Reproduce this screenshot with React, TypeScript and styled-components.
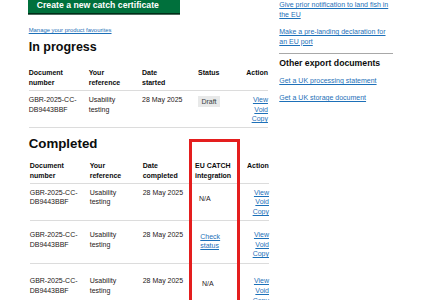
import React from "react";
import styled, { createGlobalStyle } from "styled-components";

const GlobalStyle = createGlobalStyle`
  html, body { margin: 0; padding: 0; background: #ffffff; }
  body {
    font-family: "Liberation Sans", Arial, sans-serif;
    color: #0b0c0c;
  }
`;

const LINK = "#1d70b8";
const BORDER = "#dcdcdc";

const Page = styled.div`
  display: flex;
  align-items: flex-start;
  gap: 10.3px;
  padding-left: 28.7px;
`;

const Main = styled.main`
  width: 240.3px;
  display: flex;
  flex-direction: column;
  align-items: flex-start;
`;

const StartButton = styled.a`
  display: block;
  box-sizing: border-box;
  width: 151.7px;
  margin-left: -0.4px;
  padding: 0 0 2.9px 8.4px;
  background: #00703c;
  box-shadow: 0 1.7px 0 #002d18;
  color: #ffffff;
  font-weight: 700;
  font-size: 8.7px;
  line-height: 10.4px;
  text-decoration: none;
`;

const SmallLink = styled.a`
  display: block;
  margin-top: 14.2px;
  font-size: 5.9px;
  line-height: 7px;
  color: ${LINK};
  text-decoration: underline;
`;

const Heading = styled.h2<{ $size: number; $lh: number; $mt: number }>`
  margin: ${(p) => p.$mt}px 0 0;
  font-size: ${(p) => p.$size}px;
  line-height: ${(p) => p.$lh}px;
  font-weight: 700;
`;

const Table = styled.div<{ $mt: number; $ml?: number }>`
  margin-top: ${(p) => p.$mt}px;
  margin-left: ${(p) => p.$ml ?? 0}px;
  width: 239.3px;
  font-size: 7px;
  line-height: 9.7px;
`;

const Row = styled.div<{ $cols: string; $pt: number; $pb: number }>`
  display: grid;
  grid-template-columns: ${(p) => p.$cols};
  padding: ${(p) => p.$pt}px 0 ${(p) => p.$pb}px;
  border-bottom: 1px solid ${BORDER};
`;

const HeadCell = styled.div`
  font-weight: 700;
  padding-right: 6.7px;
`;

const Cell = styled.div`
  padding-right: 6.7px;
  color: #1f2020;
`;

const ActionCell = styled.div`
  display: flex;
  flex-direction: column;
  align-items: flex-end;
`;

const TextLink = styled.a`
  color: ${LINK};
  text-decoration: underline;
  text-underline-offset: 1px;
`;

const Tag = styled.span`
  display: inline-block;
  margin-top: 1.4px;
  margin-left: -0.3px;
  padding: 0.4px 3.7px;
  background: #e8e9e9;
  color: #383f43;
`;

const EuCell = styled.div<{ $dx: number; $dy: number }>`
  padding: ${(p) => p.$dy}px 0 0 ${(p) => p.$dx}px;
  color: #1f2020;
`;

const WrapLink = styled(TextLink)`
  display: inline-block;
  width: min-content;
`;

const CompletedSection = styled.section`
  position: relative;
  align-self: stretch;
  display: flex;
  flex-direction: column;
  align-items: flex-start;
`;

const Highlight = styled.div`
  position: absolute;
  left: 160.3px;
  top: 11.6px;
  width: 51px;
  height: 190px;
  box-sizing: border-box;
  border: 3px solid #e41e1e;
  pointer-events: none;
`;

const Aside = styled.aside`
  width: 114px;
  display: flex;
  flex-direction: column;
`;

const SideLink = styled.a<{ $mt: number }>`
  display: block;
  margin-top: ${(p) => p.$mt}px;
  font-size: 7px;
  line-height: 9.7px;
  color: ${LINK};
  text-decoration: underline;
  text-underline-offset: 1px;
`;

const Rule = styled.hr`
  margin: 6.95px 0 0;
  height: 0;
  border: 0;
  border-top: 1px solid #a8a8a8;
  width: 100%;
`;

const SideHeading = styled.h3`
  margin: 3.3px 0 0;
  font-size: 8.7px;
  line-height: 10.4px;
  font-weight: 700;
`;

const Lines = ({ lines }: { lines: string[] }) => (
  <>
    {lines.map((l, i) => (
      <React.Fragment key={i}>
        {i > 0 && <br />}
        {l}
      </React.Fragment>
    ))}
  </>
);

const Actions = () => (
  <ActionCell>
    <TextLink href="#">View</TextLink>
    <TextLink href="#">Void</TextLink>
    <TextLink href="#">Copy</TextLink>
  </ActionCell>
);

const DOC = "GBR-2025-CC-DB9443BBF";
const IN_COLS = "60px 53.3px 56px 48.3px 21.7px";
const DONE_COLS = "60px 53px 52.3px 52px 22px";

const completedRows = [
  { pt: 3.45, pb: 3.25, dx: 4, dy: 6.3, eu: "na" },
  { pt: 8.95, pb: 3.55, dx: 5.3, dy: 1.7, eu: "check" },
  { pt: 12.55, pb: 3.3, dx: 7, dy: 3, eu: "na" },
];

export default function App() {
  return (
    <>
      <GlobalStyle />
      <Page>
        <Main>
          <StartButton href="#">Create a new catch certificate</StartButton>
          <SmallLink href="#">Manage your product favourites</SmallLink>
          <Heading $size={12.5} $lh={15} $mt={6}>
            In progress
          </Heading>
          <Table $mt={12.35}>
            <Row $cols={IN_COLS} $pt={0} $pb={3.15}>
              <HeadCell><Lines lines={["Document", "number"]} /></HeadCell>
              <HeadCell><Lines lines={["Your", "reference"]} /></HeadCell>
              <HeadCell><Lines lines={["Date", "started"]} /></HeadCell>
              <HeadCell>Status</HeadCell>
              <HeadCell>Action</HeadCell>
            </Row>
            <Row $cols={IN_COLS} $pt={3.45} $pb={2.85}>
              <Cell>{DOC}</Cell>
              <Cell>Usability testing</Cell>
              <Cell>28 May 2025</Cell>
              <Cell>
                <Tag>Draft</Tag>
              </Cell>
              <Actions />
            </Row>
          </Table>

          <CompletedSection>
            <Heading $size={13.3} $lh={16} $mt={8.6}>
              Completed
            </Heading>
            <Table $mt={8.45} $ml={1}>
              <Row $cols={DONE_COLS} $pt={0} $pb={3.15}>
                <HeadCell><Lines lines={["Document", "number"]} /></HeadCell>
                <HeadCell><Lines lines={["Your", "reference"]} /></HeadCell>
                <HeadCell><Lines lines={["Date", "completed"]} /></HeadCell>
                <HeadCell><Lines lines={["EU CATCH", "integration"]} /></HeadCell>
                <HeadCell>Action</HeadCell>
              </Row>
              {completedRows.map((r, i) => (
                <Row key={i} $cols={DONE_COLS} $pt={r.pt} $pb={r.pb}>
                  <Cell>{DOC}</Cell>
                  <Cell>Usability testing</Cell>
                  <Cell>28 May 2025</Cell>
                  <EuCell $dx={r.dx} $dy={r.dy}>
                    {r.eu === "check" ? (
                      <WrapLink href="#">Check status</WrapLink>
                    ) : (
                      "N/A"
                    )}
                  </EuCell>
                  <Actions />
                </Row>
              ))}
            </Table>
            <Highlight />
          </CompletedSection>
        </Main>

        <Aside>
          <SideLink href="#" $mt={0.15}>
            Give prior notification to land fish in the EU
          </SideLink>
          <SideLink href="#" $mt={7.6}>
            Make a pre-landing declaration for an EU port
          </SideLink>
          <Rule />
          <SideHeading>Other export documents</SideHeading>
          <SideLink href="#" $mt={7.95}>
            Get a UK processing statement
          </SideLink>
          <SideLink href="#" $mt={7.3}>
            Get a UK storage document
          </SideLink>
        </Aside>
      </Page>
    </>
  );
}
